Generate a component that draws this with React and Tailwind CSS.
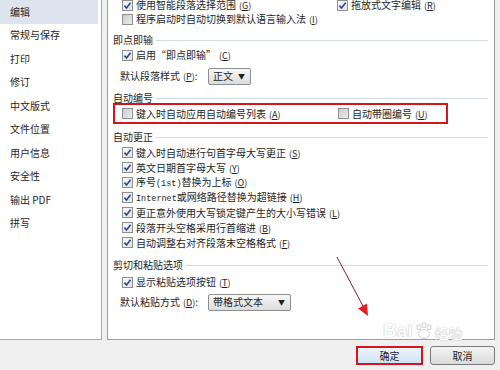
import React from "react";

const Check = ({ checked }) => (
  <span
    className={
      "w-[11px] h-[11px] shrink-0 border border-[#8e8f8f] flex items-center justify-center " +
      (checked
        ? "bg-linear-to-br from-[#f7f7f7] to-[#e2e2e2]"
        : "bg-linear-to-br from-[#cdcdcd] to-[#ececec]")
    }
  >
    {checked && (
      <svg width="9" height="9" viewBox="0 0 9 9">
        <path d="M1.4 4.6 L3.5 7 L7.6 1.7" fill="none" stroke="#2a4c8c" strokeWidth="1.6" />
      </svg>
    )}
  </span>
);

const Acc = ({ k }) => (
  <span className="ml-[3px] text-[9px]">
    (<span className="underline">{k}</span>)
  </span>
);

const Item = ({ checked, k, children, className = "" }) => (
  <div className={"flex items-center gap-[3px] " + className}>
    <Check checked={checked} />
    <span className="whitespace-nowrap">
      {children}
      <Acc k={k} />
    </span>
  </div>
);

const Header = ({ title, className = "" }) => (
  <div className={"flex items-center pl-[5px] pr-[6px] h-[10px] gap-[3px] " + className}>
    <span className="whitespace-nowrap">{title}</span>
    <div className="flex-1 h-px bg-[#d3dae0]" />
  </div>
);

const Combo = ({ text, w }) => (
  <div
    className={
      "h-[17px] border border-[#8e8f8f] rounded-[2px] bg-linear-to-b from-[#f8f8f8] to-[#dcdcdc] flex items-center justify-between pl-[4px] pr-[5px] " +
      w
    }
  >
    <span className="text-[10px]">{text}</span>
    <span className="text-[7px] text-[#222]">▼</span>
  </div>
);

const sideItems = [
  "编辑",
  "常规与保存",
  "打印",
  "修订",
  "中文版式",
  "文件位置",
  "用户信息",
  "安全性",
  "输出 PDF",
  "拼写",
];

export default function App() {
  return (
    <div className="w-[500px] h-[370px] bg-[#f0f0f0] relative overflow-hidden text-[10px] leading-none text-[#1e1e1e] font-['Noto_Sans_CJK_SC',sans-serif]">
      <div className="flex h-[340px]">
        {/* sidebar */}
        <div className="w-[102px] h-[340px] bg-white border-r border-b border-[#a8a8a8] flex flex-col">
          {sideItems.map((s, i) => (
            <div
              key={s}
              className={
                "h-[23.5px] w-[98px] shrink-0 flex items-center pl-[10px] " +
                (i === 0 ? "bg-[#dde4ef]" : "")
              }
            >
              {s}
            </div>
          ))}
        </div>

        {/* content panel */}
        <div className="ml-[5px] w-[388px] h-[340px] bg-white border-x border-b border-[#9c9c9c] flex flex-col overflow-hidden">
          <div className="-mt-[2px] h-[14px] flex items-center pl-[14px]">
            <div className="w-[215px]">
              <Item checked k="G">使用智能段落选择范围</Item>
            </div>
            <Item checked k="R">拖放式文字编辑</Item>
          </div>
          <div className="h-[14px] flex items-center pl-[14px]">
            <Item k="I">程序启动时自动切换到默认语言输入法</Item>
          </div>

          <Header title="即点即输" className="mt-[9px]" />
          <div className="mt-[3px] h-[14px] flex items-center pl-[14px]">
            <Item checked k="C">启用“即点即输”</Item>
          </div>
          <div className="mt-[5px] h-[18px] flex items-center pl-[12px]">
            <span className="w-[88px] whitespace-nowrap">
              默认段落样式<Acc k="P" />:
            </span>
            <Combo text="正文" w="w-[43px]" />
          </div>

          <Header title="自动编号" className="mt-[8px]" />
          <div className="ml-[5px] w-[335px] h-[21px] border-2 border-[#d4161c] flex items-center">
            <div className="w-[223px] pl-[7px]">
              <Item k="A">键入时自动应用自动编号列表</Item>
            </div>
            <Item k="U">自动带圈编号</Item>
          </div>

          <Header title="自动更正" className="mt-[8px]" />
          <div className="mt-[3px] flex flex-col pl-[14px]">
            <Item checked k="S" className="h-[15px]">键入时自动进行句首字母大写更正</Item>
            <Item checked k="Y" className="h-[15px]">英文日期首字母大写</Item>
            <Item checked k="O" className="h-[15px]">
              序号<span className="font-['Liberation_Mono',monospace] text-[8.5px]">(1st)</span>替换为上标
            </Item>
            <Item checked k="H" className="h-[15px]">
              <span className="font-['Liberation_Mono',monospace] text-[8.5px]">Internet</span>或网络路径替换为超链接
            </Item>
            <Item checked k="L" className="h-[15px]">更正意外使用大写锁定键产生的大小写错误</Item>
            <Item checked k="B" className="h-[15px]">段落开头空格采用行首缩进</Item>
            <Item checked k="F" className="h-[15px]">自动调整右对齐段落末空格格式</Item>
          </div>

          <Header title="剪切和粘贴选项" className="mt-[10px]" />
          <div className="mt-[5px] h-[14px] flex items-center pl-[14px]">
            <Item checked k="T">显示粘贴选项按钮</Item>
          </div>
          <div className="mt-[4px] h-[18px] flex items-center pl-[12px]">
            <span className="w-[88px] whitespace-nowrap">
              默认粘贴方式<Acc k="D" />:
            </span>
            <Combo text="带格式文本" w="w-[83px]" />
          </div>
        </div>
      </div>

      {/* buttons */}
      <div className="flex justify-end gap-[7px] pr-[5px] pt-[6px]">
        <button className="w-[67px] h-[19px] border-2 border-[#d4161c] bg-linear-to-b from-[#eef5fb] to-[#cfe2f3] flex items-center justify-center text-[10px]">
          确定
        </button>
        <button className="w-[65px] h-[19px] border border-[#7a7a7a] rounded-[3px] bg-linear-to-b from-[#f4f4f4] to-[#dadada] flex items-center justify-center text-[10px]">
          取消
        </button>
      </div>

      {/* watermark */}
      <div className="absolute left-[383px] top-[321px] flex items-end text-white [text-shadow:0_0_1px_#b8b8b8,0_0_1px_#b8b8b8]">
        <span className="text-[19px] font-bold leading-none font-['Liberation_Sans',sans-serif]">Bai</span>
        <svg width="20" height="18" viewBox="0 0 20 18" className="mx-[1px]">
          <g fill="#ffffff" stroke="#c4c4c4" strokeWidth="0.8">
            <ellipse cx="5" cy="5" rx="2" ry="2.6" />
            <ellipse cx="10" cy="3.2" rx="2" ry="2.6" />
            <ellipse cx="15" cy="5" rx="2" ry="2.6" />
            <ellipse cx="10" cy="12" rx="5.5" ry="4.5" />
          </g>
        </svg>
        <span className="text-[14px] leading-none">经验</span>
      </div>

      {/* red arrow annotation */}
      <svg className="absolute left-0 top-0 pointer-events-none" width="500" height="370">
        <line x1="337" y1="257" x2="364" y2="308" stroke="#8e1f22" strokeWidth="1" />
        <polygon points="368,316 358,308.5 367,303.5" fill="#e02024" />
      </svg>
    </div>
  );
}
